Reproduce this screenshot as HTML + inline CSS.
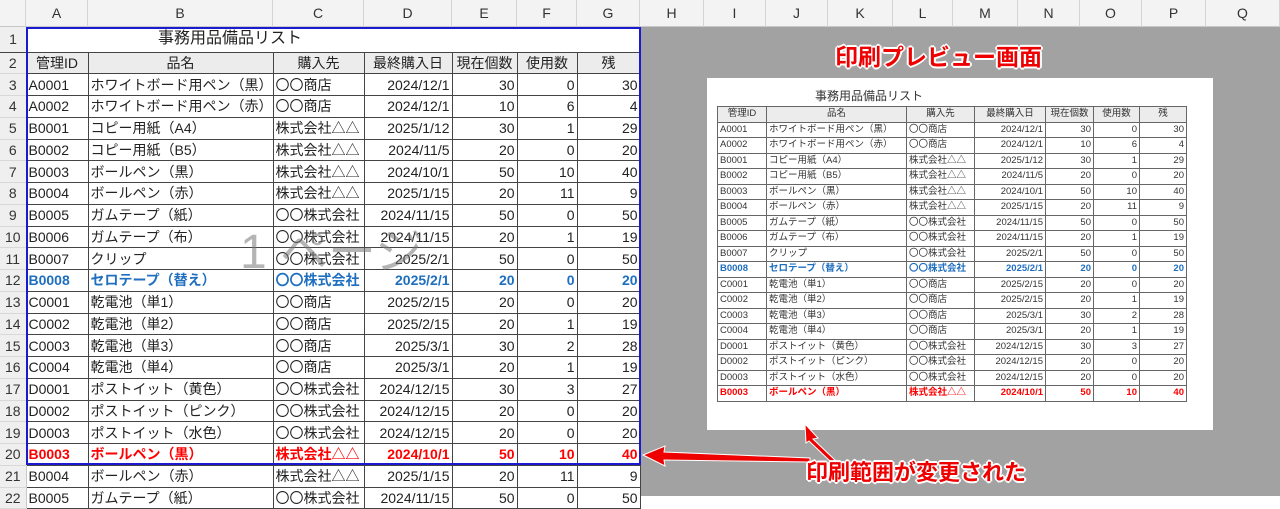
<!DOCTYPE html>
<html><head><meta charset="utf-8"><style>
*{margin:0;padding:0;box-sizing:border-box}
body{width:1280px;height:496px;overflow:hidden;background:#fff;font-family:"Liberation Sans","Noto Sans CJK JP",sans-serif;position:relative}
.ch{position:absolute;top:0;height:27px;background:#f3f3f3;border-right:1px solid #d4d4d4;border-bottom:1px solid #c8c8c8;font-size:14px;color:#333;text-align:center;line-height:27px}
.gray{position:absolute;left:640px;top:27px;width:640px;height:469px;background:#a2a2a2}
table{border-collapse:collapse;table-layout:fixed;position:absolute}
#m{left:0;top:27px;width:640px;font-size:14px;color:#222}
#m td{border:1px solid #444;height:21.75px;padding:0 2px;white-space:nowrap;overflow:hidden;line-height:20px}
#m td.rn{background:#efefef;border:none;border-right:1px solid #c8c8c8;border-bottom:1px solid #d8d8d8;color:#333;text-align:center;padding:0}
#m tr.t td{height:25px;border:none;border-bottom:1px solid #444}
.r{text-align:right}
.h td{background:#ececec;text-align:center}
.b td{color:#1f6fc0;font-weight:bold}
.rd td{color:#f00;font-weight:bold}
#m tr td.rn{color:#333;font-weight:normal}
.page{position:absolute;left:707px;top:78px;width:506px;height:352px;background:#fff}
#p{left:10px;top:28px;width:469px;font-size:9.5px;color:#333}
#p td{border:1px solid #666;height:15.5px;padding:0 2px;white-space:nowrap;overflow:hidden;line-height:14px}
</style></head><body>
<div class="ch" style="left:0;width:26px"></div>
<div class="ch" style="left:26px;width:62px">A</div><div class="ch" style="left:88px;width:185px">B</div><div class="ch" style="left:273px;width:91px">C</div><div class="ch" style="left:364px;width:88px">D</div><div class="ch" style="left:452px;width:65px">E</div><div class="ch" style="left:517px;width:60px">F</div><div class="ch" style="left:577px;width:63px">G</div><div class="ch" style="left:640px;width:64px">H</div><div class="ch" style="left:704px;width:62px">I</div><div class="ch" style="left:766px;width:62px">J</div><div class="ch" style="left:828px;width:65px">K</div><div class="ch" style="left:893px;width:60px">L</div><div class="ch" style="left:953px;width:65px">M</div><div class="ch" style="left:1018px;width:62px">N</div><div class="ch" style="left:1080px;width:62px">O</div><div class="ch" style="left:1142px;width:64px">P</div><div class="ch" style="left:1206px;width:74px">Q</div>
<div class="gray"></div>
<table id="m"><colgroup><col style="width:26px"><col style="width:62px"><col style="width:185px"><col style="width:91px"><col style="width:88px"><col style="width:65px"><col style="width:60px"><col style="width:63px"></colgroup>
<tr class="t"><td class="rn">1</td><td></td><td colspan="3" style="font-size:16px;padding-left:70px">事務用品備品リスト</td><td></td><td></td><td></td></tr>
<tr class="h"><td class="rn">2</td><td>管理ID</td><td>品名</td><td>購入先</td><td>最終購入日</td><td>現在個数</td><td>使用数</td><td>残</td></tr>
<tr><td class="rn">3</td><td>A0001</td><td>ホワイトボード用ペン（黒）</td><td>〇〇商店</td><td class="r">2024/12/1</td><td class="r">30</td><td class="r">0</td><td class="r">30</td></tr>
<tr><td class="rn">4</td><td>A0002</td><td>ホワイトボード用ペン（赤）</td><td>〇〇商店</td><td class="r">2024/12/1</td><td class="r">10</td><td class="r">6</td><td class="r">4</td></tr>
<tr><td class="rn">5</td><td>B0001</td><td>コピー用紙（A4）</td><td>株式会社△△</td><td class="r">2025/1/12</td><td class="r">30</td><td class="r">1</td><td class="r">29</td></tr>
<tr><td class="rn">6</td><td>B0002</td><td>コピー用紙（B5）</td><td>株式会社△△</td><td class="r">2024/11/5</td><td class="r">20</td><td class="r">0</td><td class="r">20</td></tr>
<tr><td class="rn">7</td><td>B0003</td><td>ボールペン（黒）</td><td>株式会社△△</td><td class="r">2024/10/1</td><td class="r">50</td><td class="r">10</td><td class="r">40</td></tr>
<tr><td class="rn">8</td><td>B0004</td><td>ボールペン（赤）</td><td>株式会社△△</td><td class="r">2025/1/15</td><td class="r">20</td><td class="r">11</td><td class="r">9</td></tr>
<tr><td class="rn">9</td><td>B0005</td><td>ガムテープ（紙）</td><td>〇〇株式会社</td><td class="r">2024/11/15</td><td class="r">50</td><td class="r">0</td><td class="r">50</td></tr>
<tr><td class="rn">10</td><td>B0006</td><td>ガムテープ（布）</td><td>〇〇株式会社</td><td class="r">2024/11/15</td><td class="r">20</td><td class="r">1</td><td class="r">19</td></tr>
<tr><td class="rn">11</td><td>B0007</td><td>クリップ</td><td>〇〇株式会社</td><td class="r">2025/2/1</td><td class="r">50</td><td class="r">0</td><td class="r">50</td></tr>
<tr class="b"><td class="rn">12</td><td>B0008</td><td>セロテープ（替え）</td><td>〇〇株式会社</td><td class="r">2025/2/1</td><td class="r">20</td><td class="r">0</td><td class="r">20</td></tr>
<tr><td class="rn">13</td><td>C0001</td><td>乾電池（単1）</td><td>〇〇商店</td><td class="r">2025/2/15</td><td class="r">20</td><td class="r">0</td><td class="r">20</td></tr>
<tr><td class="rn">14</td><td>C0002</td><td>乾電池（単2）</td><td>〇〇商店</td><td class="r">2025/2/15</td><td class="r">20</td><td class="r">1</td><td class="r">19</td></tr>
<tr><td class="rn">15</td><td>C0003</td><td>乾電池（単3）</td><td>〇〇商店</td><td class="r">2025/3/1</td><td class="r">30</td><td class="r">2</td><td class="r">28</td></tr>
<tr><td class="rn">16</td><td>C0004</td><td>乾電池（単4）</td><td>〇〇商店</td><td class="r">2025/3/1</td><td class="r">20</td><td class="r">1</td><td class="r">19</td></tr>
<tr><td class="rn">17</td><td>D0001</td><td>ポストイット（黄色）</td><td>〇〇株式会社</td><td class="r">2024/12/15</td><td class="r">30</td><td class="r">3</td><td class="r">27</td></tr>
<tr><td class="rn">18</td><td>D0002</td><td>ポストイット（ピンク）</td><td>〇〇株式会社</td><td class="r">2024/12/15</td><td class="r">20</td><td class="r">0</td><td class="r">20</td></tr>
<tr><td class="rn">19</td><td>D0003</td><td>ポストイット（水色）</td><td>〇〇株式会社</td><td class="r">2024/12/15</td><td class="r">20</td><td class="r">0</td><td class="r">20</td></tr>
<tr class="rd"><td class="rn">20</td><td>B0003</td><td>ボールペン（黒）</td><td>株式会社△△</td><td class="r">2024/10/1</td><td class="r">50</td><td class="r">10</td><td class="r">40</td></tr>
<tr><td class="rn">21</td><td>B0004</td><td>ボールペン（赤）</td><td>株式会社△△</td><td class="r">2025/1/15</td><td class="r">20</td><td class="r">11</td><td class="r">9</td></tr>
<tr><td class="rn">22</td><td>B0005</td><td>ガムテープ（紙）</td><td>〇〇株式会社</td><td class="r">2024/11/15</td><td class="r">50</td><td class="r">0</td><td class="r">50</td></tr>
</table>
<div style="position:absolute;left:26px;top:27px;width:615px;height:438px;border:2px solid #1a1ad0"></div>
<div style="position:absolute;left:240px;top:212px;font-size:48px;color:rgba(120,120,120,.55);white-space:nowrap">1 ページ</div>
<div class="page">
<div style="position:absolute;left:108px;top:9px;font-size:12px;color:#333">事務用品備品リスト</div>
<table id="p"><colgroup><col style="width:49px"><col style="width:140px"><col style="width:68px"><col style="width:71px"><col style="width:48px"><col style="width:46px"><col style="width:47px"></colgroup>
<tr class="h"><td>管理ID</td><td>品名</td><td>購入先</td><td>最終購入日</td><td>現在個数</td><td>使用数</td><td>残</td></tr>
<tr><td>A0001</td><td>ホワイトボード用ペン（黒）</td><td>〇〇商店</td><td class="r">2024/12/1</td><td class="r">30</td><td class="r">0</td><td class="r">30</td></tr>
<tr><td>A0002</td><td>ホワイトボード用ペン（赤）</td><td>〇〇商店</td><td class="r">2024/12/1</td><td class="r">10</td><td class="r">6</td><td class="r">4</td></tr>
<tr><td>B0001</td><td>コピー用紙（A4）</td><td>株式会社△△</td><td class="r">2025/1/12</td><td class="r">30</td><td class="r">1</td><td class="r">29</td></tr>
<tr><td>B0002</td><td>コピー用紙（B5）</td><td>株式会社△△</td><td class="r">2024/11/5</td><td class="r">20</td><td class="r">0</td><td class="r">20</td></tr>
<tr><td>B0003</td><td>ボールペン（黒）</td><td>株式会社△△</td><td class="r">2024/10/1</td><td class="r">50</td><td class="r">10</td><td class="r">40</td></tr>
<tr><td>B0004</td><td>ボールペン（赤）</td><td>株式会社△△</td><td class="r">2025/1/15</td><td class="r">20</td><td class="r">11</td><td class="r">9</td></tr>
<tr><td>B0005</td><td>ガムテープ（紙）</td><td>〇〇株式会社</td><td class="r">2024/11/15</td><td class="r">50</td><td class="r">0</td><td class="r">50</td></tr>
<tr><td>B0006</td><td>ガムテープ（布）</td><td>〇〇株式会社</td><td class="r">2024/11/15</td><td class="r">20</td><td class="r">1</td><td class="r">19</td></tr>
<tr><td>B0007</td><td>クリップ</td><td>〇〇株式会社</td><td class="r">2025/2/1</td><td class="r">50</td><td class="r">0</td><td class="r">50</td></tr>
<tr class="b"><td>B0008</td><td>セロテープ（替え）</td><td>〇〇株式会社</td><td class="r">2025/2/1</td><td class="r">20</td><td class="r">0</td><td class="r">20</td></tr>
<tr><td>C0001</td><td>乾電池（単1）</td><td>〇〇商店</td><td class="r">2025/2/15</td><td class="r">20</td><td class="r">0</td><td class="r">20</td></tr>
<tr><td>C0002</td><td>乾電池（単2）</td><td>〇〇商店</td><td class="r">2025/2/15</td><td class="r">20</td><td class="r">1</td><td class="r">19</td></tr>
<tr><td>C0003</td><td>乾電池（単3）</td><td>〇〇商店</td><td class="r">2025/3/1</td><td class="r">30</td><td class="r">2</td><td class="r">28</td></tr>
<tr><td>C0004</td><td>乾電池（単4）</td><td>〇〇商店</td><td class="r">2025/3/1</td><td class="r">20</td><td class="r">1</td><td class="r">19</td></tr>
<tr><td>D0001</td><td>ポストイット（黄色）</td><td>〇〇株式会社</td><td class="r">2024/12/15</td><td class="r">30</td><td class="r">3</td><td class="r">27</td></tr>
<tr><td>D0002</td><td>ポストイット（ピンク）</td><td>〇〇株式会社</td><td class="r">2024/12/15</td><td class="r">20</td><td class="r">0</td><td class="r">20</td></tr>
<tr><td>D0003</td><td>ポストイット（水色）</td><td>〇〇株式会社</td><td class="r">2024/12/15</td><td class="r">20</td><td class="r">0</td><td class="r">20</td></tr>
<tr class="rd"><td>B0003</td><td>ボールペン（黒）</td><td>株式会社△△</td><td class="r">2024/10/1</td><td class="r">50</td><td class="r">10</td><td class="r">40</td></tr>
</table>
</div>
<div style="position:absolute;left:835px;top:38px;font-size:23px;font-weight:bold;color:#e00;text-shadow:-2px 0 #fff,2px 0 #fff,0 -2px #fff,0 2px #fff,-1px -1px #fff,1px 1px #fff,-1px 1px #fff,1px -1px #fff;white-space:nowrap">印刷プレビュー画面</div>
<svg style="position:absolute;left:0;top:0" width="1280" height="496">
<polygon points="643,455 665,446 664,452 810,458 810,462 664,460 665,466" fill="#e00" stroke="#fff" stroke-width="1"/>
<polygon points="805,424 818,438 813,439 835,460 831,462 809,441 806,443" fill="#e00" stroke="#fff" stroke-width="1"/>
</svg>
<div style="position:absolute;left:806px;top:455px;font-size:22px;font-weight:bold;color:#e00;text-shadow:-2px 0 #fff,2px 0 #fff,0 -2px #fff,0 2px #fff,-1px -1px #fff,1px 1px #fff,-1px 1px #fff,1px -1px #fff;white-space:nowrap">印刷範囲が変更された</div>
</body></html>
